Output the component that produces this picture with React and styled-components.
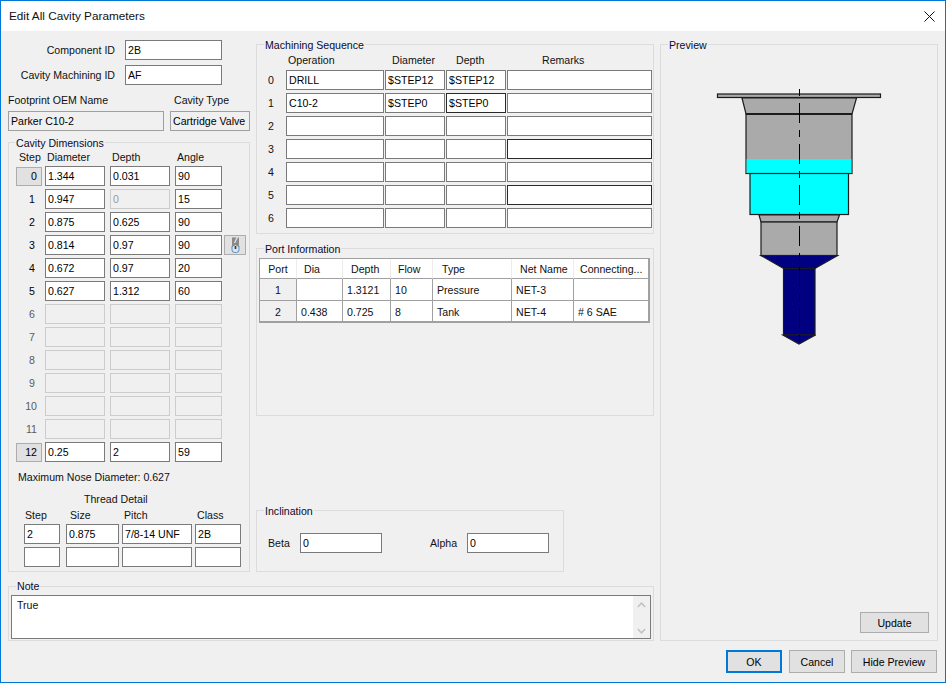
import React from "react";
import styled, { createGlobalStyle } from "styled-components";

const Global = createGlobalStyle`
  html, body { margin: 0; padding: 0; background: #f0f0f0; }
  * { box-sizing: border-box; }
  body { font-family: "Liberation Sans", Arial, sans-serif; font-size: 10.6px; color: #000; }
`;

const Window = styled.div`
  width: 946px; height: 683px; display: flex; flex-direction: column;
  border: 1px solid #0078d7; background: #f0f0f0; overflow: hidden;
`;
const TitleBar = styled.div`
  height: 30px; flex: none; background: #fff; display: flex; align-items: center;
  justify-content: space-between; padding: 0 10px 2px 8px; font-size: 11.75px; color: #111;
`;
const Close = styled.svg`width: 11px; height: 11px; display: block; margin-top: 2px;`;
const Content = styled.div`
  display: grid; grid-template-columns: 646px 278px; column-gap: 6px; padding: 9px 7px 0;
`;
const MainArea = styled.div`display: flex; flex-direction: column;`;
const UpperRow = styled.div`display: flex; gap: 6px;`;
const LeftCol = styled.div`width: 242px; display: flex; flex-direction: column;`;
const MidCol = styled.div`width: 398px; padding-top: 4px; display: flex; flex-direction: column;`;

const Group = styled.section`
  position: relative; border: 1px solid #dcdcdc; height: ${p => p.$h}px; width: ${p => p.$w || "auto"};
  margin-top: ${p => p.$top || 0}px;
`;
const Legend = styled.span`
  position: absolute; top: ${p => p.$y ?? -7}px; left: ${p => p.$x ?? 7}px; background: #f0f0f0; padding: 0 1px;
  line-height: 14px; color: #0a0a30; white-space: nowrap;
`;

const Field = styled.input`
  display: block; width: ${p => (p.$w ? `${p.$w}px` : "100%")}; height: 20px; margin: 0;
  padding: 0 2px; font: inherit; color: #000; background: #fff; outline: none;
  border: 1px solid ${p => (p.$focus ? "#2a2a2a" : "#7a7a7a")}; border-radius: 0;
  &:disabled { background: #f0f0f0; border-color: #cccccc; color: #9a9a9a; }
  &[data-static="true"] { background: #f0f0f0; border-color: #a0a0a0; color: #000; }
`;
const IdRow = styled.div`
  display: grid; grid-template-columns: 107px 97px; column-gap: 10px; align-items: center; margin-bottom: 5px;
`;
const RightLabel = styled.label`text-align: right; white-space: nowrap; color: #111;`;
const FootGrid = styled.div`
  display: grid; grid-template-columns: 156px 80px; column-gap: 6px; margin-top: 3px;
`;
const FootLabel = styled.label`display: block; height: 18px; line-height: 14px; padding-left: ${p => p.$pad || 0}px; color: #111;`;

const DimHead = styled.div`
  display: grid; grid-template-columns: 29px 65px 65px 70px; height: 16px; margin: 7px 0 0 7px; line-height: 14px;
`;
const HeadText = styled.span`padding-left: ${p => p.$pad || 0}px; color: #111; white-space: nowrap;`;
const DimList = styled.div`display: flex; flex-direction: column; gap: 3px;`;
const DimRow = styled.div`
  display: grid; grid-template-columns: 29px 65px 65px 49px 22px; margin-left: 7px; align-items: center; height: 20px;
`;
const StepNum = styled.div`
  width: 26px; height: ${p => (p.$boxed ? "19px" : "20px")}; line-height: ${p => (p.$boxed ? "17px" : "20px")};
  text-align: right; padding-right: ${p => p.$pad}px;
  color: ${p => (p.$off ? "#5c5c5c" : "#000")};
  background: ${p => (p.$boxed ? "#e1e1e1" : "transparent")};
  border: ${p => (p.$boxed ? "1px solid #adadad" : "none")};
`;
const IconButton = styled.button`
  width: 22px; height: 20px; padding: 0; margin: 0; background: #e1e1e1; border: 1px solid #adadad;
  display: flex; align-items: center; justify-content: center;
`;
const MaxNose = styled.div`margin: 8px 0 0 9px; line-height: 14px; color: #111;`;
const ThreadTitle = styled.div`margin: 8px 0 0 75px; line-height: 14px; color: #111;`;
const ThreadHead = styled.div`
  display: grid; grid-template-columns: 42px 56px 73px 46px; margin: 2px 0 2px 15px; line-height: 14px;
`;
const ThreadRow = styled.div`
  display: grid; grid-template-columns: 42px 56px 73px 46px; margin: 0 0 3px 15px;
`;

const SeqHead = styled.div`
  display: grid; grid-template-columns: 29px 99px 61px 61px 145px; height: 17px; margin-top: 8px; line-height: 14px;
`;
const SeqList = styled.div`display: flex; flex-direction: column; gap: 3px;`;
const SeqRow = styled.div`
  display: grid; grid-template-columns: 29px 99px 61px 61px 145px; height: 20px; align-items: center;
`;
const SeqNum = styled.div`text-align: center; padding-right: 1px; color: #111;`;

const Table = styled.table`
  table-layout: fixed; width: 391px; margin: 9px 0 0 2px; border-collapse: separate; border-spacing: 0;
  border-top: 1px solid #a0a0a0; border-left: 1px solid #a0a0a0;
  border-right: 2px solid #a0a0a0; border-bottom: 2px solid #a0a0a0; font-size: inherit;
`;
const Th = styled.th`
  font-weight: normal; text-align: ${p => (p.$center ? "center" : "left")}; height: 20px; padding: 0 0 0 ${p => p.$pad || 0}px;
  background: #fff; color: #111; border-right: 1px solid #ececec; border-bottom: 1px solid #a0a0a0; white-space: nowrap; overflow: hidden;
  &:last-child { border-right: none; }
`;
const Td = styled.td`
  height: 22px; padding: 0 0 0 4px; background: #fff; color: #111;
  border-right: 1px solid #a0a0a0; border-bottom: 1px solid #a0a0a0; white-space: nowrap;
  &:last-child { border-right: none; }
  tr:last-child & { border-bottom: none; height: 20px; padding-top: 1px; }
`;
const PortCell = styled(Td)`background: #f0f0f0; text-align: center; padding-left: 0;`;

const Spacer = styled.div`flex: 1;`;
const IncBody = styled.div`display: flex; align-items: center; padding: 22px 0 0 11px;`;
const IncLabel = styled.label`width: ${p => p.$w}px; color: #111;`;

const NoteBox = styled.div`
  display: flex; margin: 8px 2px 0 2px; height: 44px; border: 1px solid #7a7a7a; background: #fff;
`;
const NoteText = styled.div`flex: 1; padding: 3px 5px; color: #111;`;
const Scroll = styled.div`
  width: 17px; background: #f0f0f0; display: flex; flex-direction: column; justify-content: space-between; align-items: center; padding: 6px 0 4px;
`;
const Chevron = styled.svg`width: 9px; height: 6px; display: block;`;

const Preview = styled(Group)`display: flex; flex-direction: column; margin-top: 4px; height: 597px;`;
const Drawing = styled.svg`display: block; width: 276px; height: 280px; margin-top: 35px; flex: none;`;
const Btn = styled.button`
  font: inherit; color: #000; background: #e1e1e1; padding: 0; margin: 0 ${p => (p.$primary ? 1 : 0)}px 0 0;
  border: ${p => (p.$primary ? "2px solid #0078d7" : "1px solid #adadad")};
  width: ${p => p.$w}px; height: ${p => p.$h}px;
`;
const UpdateWrap = styled.div`margin-top: auto; display: flex; justify-content: flex-end; padding: 0 8px 7px 0;`;
const Footer = styled.div`display: flex; justify-content: flex-end; gap: 6px; padding: 9px 8px 0 0;`;

const dims = [
  ["1.344", "0.031", "90"], ["0.947", "0", "15"], ["0.875", "0.625", "90"], ["0.814", "0.97", "90"],
  ["0.672", "0.97", "20"], ["0.627", "1.312", "60"], null, null, null, null, null, null, ["0.25", "2", "59"],
];
const seq = [
  ["DRILL", "$STEP12", "$STEP12", ""], ["C10-2", "$STEP0", "$STEP0", ""], ["", "", "", ""], ["", "", "", ""],
  ["", "", "", ""], ["", "", "", ""], ["", "", "", ""],
];
const focus = { "1-2": true, "3-3": true, "5-3": true };

const F = ({ v = "", ...rest }) => <Field readOnly value={v} {...rest} />;

export default function App() {
  return (
    <Window>
      <Global />
      <TitleBar>
        <span>Edit All Cavity Parameters</span>
        <Close viewBox="0 0 11 11"><path d="M.5.5l10 10M10.5.5l-10 10" stroke="#111" strokeWidth="1" fill="none" /></Close>
      </TitleBar>
      <Content>
        <MainArea>
          <UpperRow>
            <LeftCol>
              <IdRow><RightLabel>Component ID</RightLabel><F v="2B" /></IdRow>
              <IdRow><RightLabel>Cavity Machining ID</RightLabel><F v="AF" /></IdRow>
              <FootGrid>
                <div><FootLabel>Footprint OEM Name</FootLabel><F v="Parker C10-2" data-static="true" /></div>
                <div><FootLabel $pad={4}>Cavity Type</FootLabel><F v="Cartridge Valve" data-static="true" /></div>
              </FootGrid>
              <Group $top={11} $h={430}>
                <Legend $x={6}>Cavity Dimensions</Legend>
                <DimHead>
                  <HeadText $pad={3}>Step</HeadText><HeadText $pad={2}>Diameter</HeadText>
                  <HeadText $pad={2}>Depth</HeadText><HeadText $pad={2}>Angle</HeadText>
                </DimHead>
                <DimList>
                  {dims.map((d, i) => {
                    const boxed = i === 0 || i === 12;
                    return (
                      <DimRow key={i}>
                        <StepNum $boxed={boxed} $off={!d} $pad={boxed ? 4 : i >= 10 ? 5 : 7}>{i}</StepNum>
                        <F $w={60} v={d ? d[0] : ""} disabled={!d} />
                        <F $w={60} v={d ? d[1] : ""} disabled={!d || i === 1} />
                        <F $w={47} v={d ? d[2] : ""} disabled={!d} />
                        {i === 3 && (
                          <IconButton>
                            <svg width="9" height="16" viewBox="0 0 9 16">
                              <path d="M1 0.5h7v9.5l-2 -1-1.5 -1-1.5 1-2 1z" fill="#8a8a8a" />
                              <path d="M6.5 0L3.5 6" stroke="#e6e6e6" strokeWidth="1.3" />
                              <path d="M1 9v4q0 2.5 2.5 2.5h2q2.5 0 2.5-2.5V9" fill="none" stroke="#4a94dc" strokeWidth="1" />
                              <path d="M4.5 9v3" stroke="#333" strokeWidth="1.6" />
                            </svg>
                          </IconButton>
                        )}
                      </DimRow>
                    );
                  })}
                </DimList>
                <MaxNose>Maximum Nose Diameter: 0.627</MaxNose>
                <ThreadTitle>Thread Detail</ThreadTitle>
                <ThreadHead>
                  <HeadText $pad={1}>Step</HeadText><HeadText $pad={4}>Size</HeadText>
                  <HeadText $pad={2}>Pitch</HeadText><HeadText $pad={2}>Class</HeadText>
                </ThreadHead>
                <ThreadRow><F $w={36} v="2" /><F $w={53} v="0.875" /><F $w={70} v="7/8-14 UNF" /><F $w={46} v="2B" /></ThreadRow>
                <ThreadRow><F $w={36} /><F $w={53} /><F $w={70} /><F $w={46} /></ThreadRow>
              </Group>
            </LeftCol>
            <MidCol>
              <Group $h={190}>
                <Legend>Machining Sequence</Legend>
                <SeqHead>
                  <span /><HeadText $pad={2}>Operation</HeadText><HeadText $pad={7}>Diameter</HeadText>
                  <HeadText $pad={10}>Depth</HeadText><HeadText $pad={35}>Remarks</HeadText>
                </SeqHead>
                <SeqList>
                  {seq.map((r, i) => (
                    <SeqRow key={i}>
                      <SeqNum>{i}</SeqNum>
                      <F $w={98} v={r[0]} />
                      <F $w={60} v={r[1]} />
                      <F $w={60} v={r[2]} $focus={focus[`${i}-2`]} />
                      <F $w={145} v={r[3]} $focus={focus[`${i}-3`]} />
                    </SeqRow>
                  ))}
                </SeqList>
              </Group>
              <Group $top={14} $h={168}>
                <Legend>Port Information</Legend>
                <Table>
                  <colgroup>
                    <col width="37" /><col width="46" /><col width="48" /><col width="42" /><col width="79" /><col width="62" /><col width="74" />
                  </colgroup>
                  <thead>
                    <tr>
                      <Th $center>Port</Th><Th $pad={7}>Dia</Th><Th $pad={8}>Depth</Th><Th $pad={7}>Flow</Th>
                      <Th $pad={9}>Type</Th><Th $pad={8}>Net Name</Th><Th $pad={6}>Connecting...</Th>
                    </tr>
                  </thead>
                  <tbody>
                    <tr><PortCell>1</PortCell><Td></Td><Td>1.3121</Td><Td>10</Td><Td>Pressure</Td><Td>NET-3</Td><Td></Td></tr>
                    <tr><PortCell>2</PortCell><Td>0.438</Td><Td>0.725</Td><Td>8</Td><Td>Tank</Td><Td>NET-4</Td><Td># 6 SAE</Td></tr>
                  </tbody>
                </Table>
              </Group>
              <Spacer />
              <Group $h={62} $w="308px">
                <Legend>Inclination</Legend>
                <IncBody>
                  <IncLabel $w={32}>Beta</IncLabel><F $w={82} v="0" />
                  <IncLabel $w={48} />
                  <IncLabel $w={37}>Alpha</IncLabel><F $w={82} v="0" />
                </IncBody>
              </Group>
            </MidCol>
          </UpperRow>
          <Group $top={14} $h={55}>
            <Legend $y={-8}>Note</Legend>
            <NoteBox>
              <NoteText>True</NoteText>
              <Scroll>
                <Chevron viewBox="0 0 9 6"><path d="M.8 5L4.5 1.2 8.2 5" fill="none" stroke="#c2c2c2" strokeWidth="1.6" /></Chevron>
                <Chevron viewBox="0 0 9 6"><path d="M.8 1l3.7 3.8L8.2 1" fill="none" stroke="#c2c2c2" strokeWidth="1.6" /></Chevron>
              </Scroll>
            </NoteBox>
          </Group>
        </MainArea>
        <Preview>
          <Legend>Preview</Legend>
          <Drawing viewBox="661 80 276 280">
            <g stroke="#1c1c1c" strokeWidth="1.2">
              <rect x="717.5" y="94" width="163" height="3.5" fill="#aaaaaa" />
              <path d="M742 98L746 114H852L856.5 98Z" fill="#aaaaaa" />
              <rect x="746" y="114" width="106" height="59.5" fill="#aaaaaa" />
              <rect x="746.6" y="159" width="104.8" height="14" fill="#00ffff" stroke="none" />
              <path d="M746 114H852" strokeWidth="1.8" fill="none" />
              <rect x="750" y="173.5" width="98.5" height="41" fill="#00ffff" />
              <path d="M759 215L761 222H837L839.5 215Z" fill="#aaaaaa" />
              <rect x="761" y="222" width="76" height="33.5" fill="#aaaaaa" />
              <path d="M761 255.5H837.5L815 268.5H783.5Z" fill="#000080" />
              <rect x="783.5" y="268.5" width="31.5" height="66.5" fill="#000080" />
              <path d="M783 335H815.5L799 344Z" fill="#000080" />
            </g>
            <path d="M799.5 89V348" stroke="#000" strokeWidth="1" strokeDasharray="7 7 20 7" fill="none" />
          </Drawing>
          <UpdateWrap><Btn $w={69} $h={21}>Update</Btn></UpdateWrap>
        </Preview>
      </Content>
      <Footer>
        <Btn $primary $w={56} $h={23}>OK</Btn>
        <Btn $w={56} $h={23}>Cancel</Btn>
        <Btn $w={86} $h={23}>Hide Preview</Btn>
      </Footer>
    </Window>
  );
}
